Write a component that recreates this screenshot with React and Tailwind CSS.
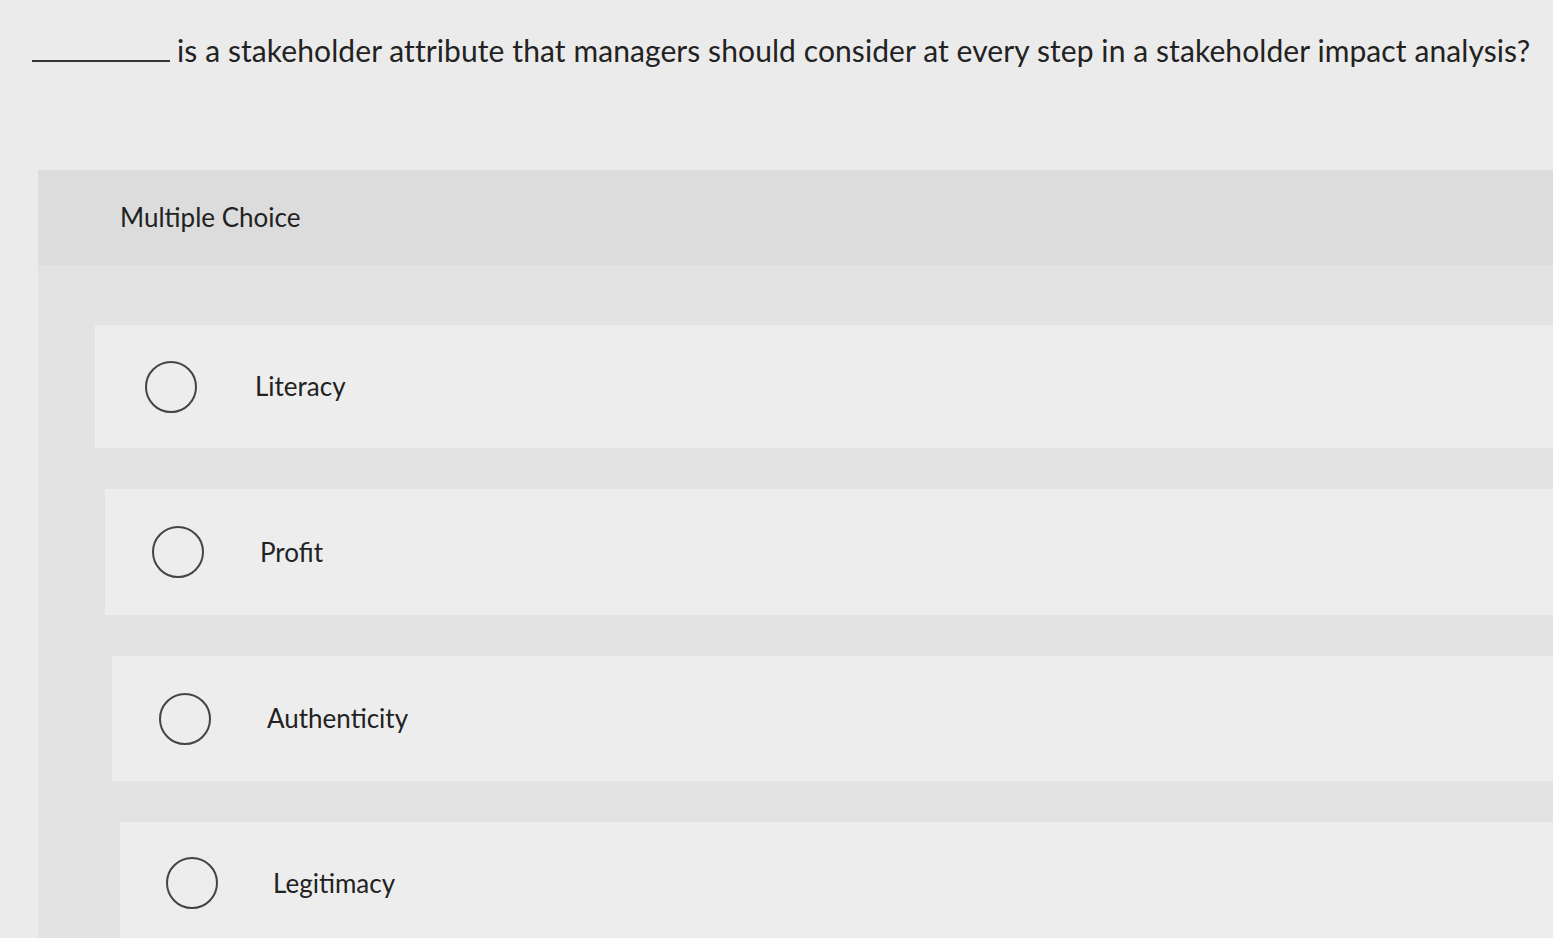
export default function App() {
  const options = [
    { label: "Literacy", ml: "ml-[57px]", h: "h-[123px]", circle: "ml-[50px]", gap: "ml-[58px]" },
    { label: "Profit", ml: "ml-[67px]", h: "h-[126px]", circle: "ml-[47px]", gap: "ml-[56px]" },
    { label: "Authenticity", ml: "ml-[74px]", h: "h-[125px]", circle: "ml-[47px]", gap: "ml-[56px]" },
    { label: "Legitimacy", ml: "ml-[82px]", h: "h-[122px]", circle: "ml-[46px]", gap: "ml-[55px]" },
  ];

  return (
    <div className="w-[1553px] h-[938px] overflow-hidden bg-[#ebebeb] text-[#222] font-['Lato','Liberation_Sans',sans-serif]">
      {/* Question */}
      <div className="flex items-start pt-[29px] pl-[32px] h-[170px]">
        <span className="inline-block w-[138px] border-b-2 border-[#333] mt-[31px]"></span>
        <span className="ml-[7px] text-[30px] leading-[42px] tracking-[0.09px] whitespace-nowrap">
          is a stakeholder attribute that managers should consider at every step in a stakeholder impact analysis?
        </span>
      </div>

      {/* Panel */}
      <div className="ml-[38px] bg-[#e3e3e3] h-[768px]">
        <div className="h-[95px] bg-[#dcdcdc] flex items-center pl-[82px]">
          <span className="text-[26px]">Multiple Choice</span>
        </div>
        <div className="pt-[60px] flex flex-col gap-[41px]">
          {options.map((o) => (
            <div key={o.label} className={`${o.ml} ${o.h} bg-[#ededed] flex items-center`}>
              <span className={`${o.circle} w-[52px] h-[52px] rounded-full border-2 border-[#444] shrink-0`}></span>
              <span className={`${o.gap} text-[26px]`}>{o.label}</span>
            </div>
          ))}
        </div>
      </div>
    </div>
  );
}
